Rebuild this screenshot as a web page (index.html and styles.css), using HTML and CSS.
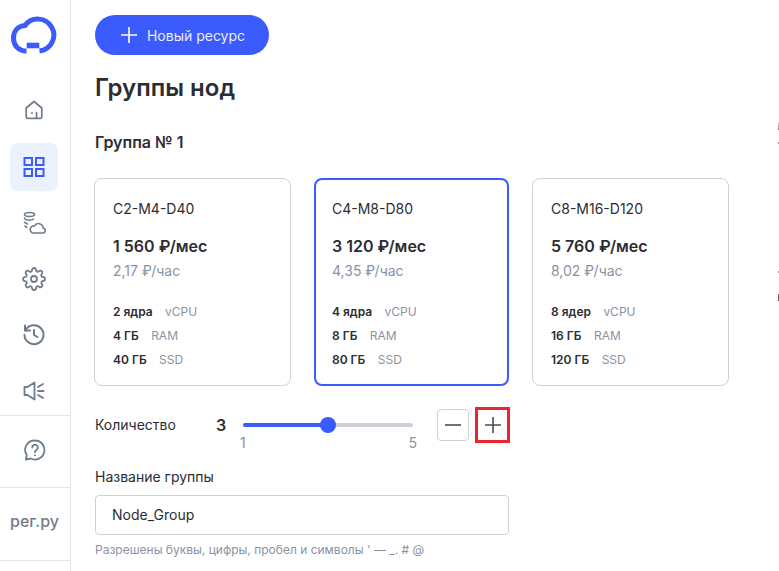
FILE: index.html
```html
<!DOCTYPE html>
<html lang="ru">
<head>
<meta charset="utf-8">
<title>Группы нод</title>
<link rel="stylesheet" href="styles.css">
</head>
<body>
<div class="app">
  <aside class="sidebar">
    <div class="logo">
      <svg width="48" height="42" viewBox="10 14 48 42" fill="none"><path d="M26.500 51C18 51 13.500 45 13.500 38C13.500 31 18 26 25 25.500A16 16 0 1 1 39.500 51" stroke="#3b5bfd" stroke-width="5"/><rect x="26.700" y="42.700" width="12.600" height="5.600" fill="#3b5bfd"/></svg>
    </div>
    <nav class="nav">
      <a class="nav-item"><svg width="22" height="22" viewBox="0 1 22 22" fill="none" stroke="#6f7c8c" stroke-width="1.700" stroke-linejoin="round" stroke-linecap="round"><path d="M3.200 9 11 2.500 18.800 9v9a1.300 1.300 0 0 1-1.300 1.300h-13a1.300 1.300 0 0 1-1.300-1.300z"/><path d="M8.500 14h.8M13.500 13.500v5.500"/></svg></a>
      <a class="nav-item active"><svg width="22" height="22" viewBox="0 0 22 22" fill="none" stroke="#3b5bfd" stroke-width="2"><rect x="1.500" y="2" width="7.500" height="7"/><rect x="13" y="2" width="7.500" height="7"/><rect x="1.500" y="13" width="7.500" height="7"/><rect x="13" y="13" width="7.500" height="7"/></svg></a>
      <a class="nav-item"><svg width="24" height="24" viewBox="0 0 24 24" fill="none" stroke="#6f7c8c" stroke-width="1.600" stroke-linecap="round" stroke-linejoin="round"><ellipse cx="7.500" cy="3.500" rx="5" ry="2"/><path d="M2.500 7c.5 1.300 2.500 2.200 5 2.200 1.500 0 3-.3 4-1M2.500 11c.5 1 1.500 1.500 3 1.900M3 15c.5.700 1 1 1.800 1.300"/><path d="M11 22h9.500a2.500 2.500 0 0 0 .5-5 4.500 4.500 0 0 0-8.500-2 3.500 3.500 0 0 0-1.500 7z"/></svg></a>
      <a class="nav-item"><svg width="24" height="24" viewBox="0 0 24 24" fill="none" stroke="#6f7c8c" stroke-width="1.800" stroke-linecap="round" stroke-linejoin="round"><circle cx="12" cy="12" r="3"/><path d="M19.400 15a1.650 1.650 0 0 0 .33 1.820l.06.06a2 2 0 0 1 0 2.830 2 2 0 0 1-2.830 0l-.06-.06a1.650 1.650 0 0 0-1.820-.33 1.650 1.650 0 0 0-1 1.510V21a2 2 0 0 1-2 2 2 2 0 0 1-2-2v-.09A1.650 1.650 0 0 0 9 19.400a1.650 1.650 0 0 0-1.820.33l-.06.06a2 2 0 0 1-2.830 0 2 2 0 0 1 0-2.830l.06-.06a1.650 1.650 0 0 0 .33-1.820 1.650 1.650 0 0 0-1.510-1H3a2 2 0 0 1-2-2 2 2 0 0 1 2-2h.09A1.650 1.650 0 0 0 4.600 9a1.650 1.650 0 0 0-.33-1.820l-.06-.06a2 2 0 0 1 0-2.830 2 2 0 0 1 2.830 0l.06.06a1.650 1.650 0 0 0 1.820.33H9a1.650 1.650 0 0 0 1-1.510V3a2 2 0 0 1 2-2 2 2 0 0 1 2 2v.09a1.650 1.650 0 0 0 1 1.510 1.650 1.650 0 0 0 1.820-.33l.06-.06a2 2 0 0 1 2.830 0 2 2 0 0 1 0 2.830l-.06.06a1.650 1.650 0 0 0-.33 1.820V9a1.650 1.650 0 0 0 1.510 1H21a2 2 0 0 1 2 2 2 2 0 0 1-2 2h-.09a1.650 1.650 0 0 0-1.510 1z"/></svg></a>
      <a class="nav-item"><svg width="22" height="22" viewBox="0 0 22 22" fill="none" stroke="#6f7c8c" stroke-width="2" stroke-linecap="round" stroke-linejoin="round"><path d="M2 1.500v5h5"/><path d="M2.500 6.500A9.500 9.500 0 1 1 1.500 11"/><path d="M11 6v5l3.500 2"/></svg></a>
      <a class="nav-item"><svg width="22" height="22" viewBox="0 0 22 22" fill="none" stroke="#6f7c8c" stroke-width="1.800" stroke-linecap="round" stroke-linejoin="round"><path d="M1.500 7v8h3l7 4.500V2.500l-7 4.500z"/><path d="M15 7l5-3M15 11h5.500M15 15l5 3"/></svg></a>
    </nav>
    <div class="side-block help">
      <svg width="22" height="22" viewBox="0 0 22 22" fill="none" stroke="#6f7c8c" stroke-width="1.800" stroke-linecap="round" stroke-linejoin="round"><path d="M11 1.500a9.500 9.500 0 1 1-4.300 18L1.800 20.500l1-4.200A9.500 9.500 0 0 1 11 1.500z"/><path d="M8.200 8.500a2.800 2.800 0 1 1 4.400 2.300c-1 .7-1.600 1.200-1.600 2.400"/><path d="M11 16.200v.1"/></svg>
    </div>
    <div class="side-block brand">рег.ру</div>
    <div class="side-rest"></div>
  </aside>
  <main class="main">
    <button class="new-btn"><svg width="16" height="16" viewBox="0 0 16 16" stroke="#fff" stroke-width="1.600" fill="none"><path d="M8 0v16M0 8h16"/></svg>Новый ресурс</button>
    <h1 class="title">Группы нод</h1>
    <h2 class="group-title">Группа № 1</h2>
    <div class="cards">
      <div class="card">
        <div class="card-name">C2-M4-D40</div>
        <div class="price">1 560 ₽/мес</div>
        <div class="hour">2,17 ₽/час</div>
        <ul class="specs">
          <li><b>2 ядра</b><span>vCPU</span></li>
          <li><b>4 ГБ</b><span>RAM</span></li>
          <li><b>40 ГБ</b><span>SSD</span></li>
        </ul>
      </div>
      <div class="card selected">
        <div class="card-name">C4-M8-D80</div>
        <div class="price">3 120 ₽/мес</div>
        <div class="hour">4,35 ₽/час</div>
        <ul class="specs">
          <li><b>4 ядра</b><span>vCPU</span></li>
          <li><b>8 ГБ</b><span>RAM</span></li>
          <li><b>80 ГБ</b><span>SSD</span></li>
        </ul>
      </div>
      <div class="card">
        <div class="card-name">C8-M16-D120</div>
        <div class="price">5 760 ₽/мес</div>
        <div class="hour">8,02 ₽/час</div>
        <ul class="specs">
          <li><b>8 ядер</b><span>vCPU</span></li>
          <li><b>16 ГБ</b><span>RAM</span></li>
          <li><b>120 ГБ</b><span>SSD</span></li>
        </ul>
      </div>
    </div>
    <div class="qty">
      <span class="qty-label">Количество</span>
      <span class="qty-value">3</span>
      <div class="slider">
        <div class="track"><div class="fill"></div><div class="thumb"></div></div>
        <div class="ticks"><span>1</span><span>5</span></div>
      </div>
      <div class="steppers">
        <button class="step"><svg width="16" height="2" viewBox="0 0 16 2"><path d="M0 1h16" stroke="#4a4f57" stroke-width="1.600"/></svg></button>
        <button class="step highlighted"><svg width="16" height="16" viewBox="0 0 16 16" fill="none"><path d="M8 0v16M0 8h16" stroke="#4a4f57" stroke-width="1.600"/></svg></button>
      </div>
    </div>
    <label class="field-label">Название группы</label>
    <div class="input">Node_Group</div>
    <p class="hint">Разрешены буквы, цифры, пробел и символы ' — _. # @</p>
  </main>
  <div class="edge">
    <div class="edge-a"></div>
    <div class="edge-b"></div>
    <div class="edge-c"></div>
    <div class="edge-d"></div>
  </div>
</div>
</body>
</html>
```
FILE: styles.css
```css
* { box-sizing: border-box; }
html, body { margin: 0; height: 571px; overflow: hidden; background: #fff; }
body { font-family: Inter, "Liberation Sans", sans-serif; color: #2b2d33; }
.app { display: flex; height: 571px; }

.sidebar { width: 71px; flex: none; border-right: 1px solid #e2e4ec; display: flex; flex-direction: column; }
.logo { height: 82px; padding: 14px 0 0 10px; }
.nav { display: flex; flex-direction: column; height: 333px; padding-top: 5px; align-items: flex-start; gap: 8px; }
.nav-item { width: 48px; height: 48px; margin-left: 10px; border-radius: 8px; display: flex; align-items: center; justify-content: center; }
.nav-item.active { background: #ebf2fd; }
.side-block { width: 70px; border-top: 1px solid #e4e6ee; display: flex; align-items: center; justify-content: center; flex: none; }
.help { height: 72px; padding-bottom: 4px; }
.brand { height: 73px; padding: 0 1px 6px 0; font-size: 16px; font-weight: 500; color: #6f7c8c; }
.side-rest { border-top: 1px solid #e4e6ee; flex: 1; width: 70px; }

.main { flex: 1; padding: 15px 0 0 24px; min-width: 0; }
.new-btn { width: 174px; height: 40px; border: 0; border-radius: 20px; background: #3b5bfd; color: #e8ecff; font: 400 14px Inter, sans-serif; display: flex; align-items: center; justify-content: center; gap: 10px; padding: 0 0 0 2px; }
.title { margin: 17px 0 0; font-size: 24px; line-height: 32px; font-weight: 600; }
.group-title { margin: 26px 0 0; font-size: 16px; line-height: 24px; font-weight: 600; }
.cards { display: flex; gap: 23px; margin-top: 24px; margin-left: -1px; }
.card { width: 197px; height: 208px; border: 1px solid #cfd0da; border-radius: 8px; padding: 20px 18px 0; }
.card.selected { border: 2px solid #3b5bfd; width: 195px; padding: 19px 16px 0; }
.card-name { font-size: 14px; line-height: 20px; }
.price { margin-top: 16px; font-size: 16px; line-height: 22px; font-weight: 600; }
.hour { margin-top: 4px; font-size: 14px; line-height: 20px; color: #8a93a3; }
.specs { list-style: none; margin: 22px 0 0; padding: 0; display: flex; flex-direction: column; gap: 6px; font-size: 12px; line-height: 18px; }
.specs b { font-weight: 600; margin-right: 12.400px; }
.specs span { color: #8a93a3; }

.qty { display: flex; align-items: flex-start; margin-top: 23px; height: 40px; }
.qty-label { width: 121px; font-size: 14px; line-height: 32px; }
.qty-value { width: 27px; font-size: 16px; font-weight: 600; line-height: 32px; }
.slider { width: 170px; padding-top: 14px; }
.track { height: 4px; background: #cdcfda; border-radius: 2px; position: relative; }
.fill { width: 85px; height: 4px; background: #3b5bfd; border-radius: 2px; }
.thumb { position: absolute; left: 77px; top: -6px; width: 16px; height: 16px; border-radius: 50%; background: #3b5bfd; }
.ticks { display: flex; justify-content: space-between; font-size: 14px; line-height: 18px; color: #8a93a3; margin: 7px -4px 0 -3px; }
.steppers { display: flex; gap: 6px; margin-left: 24px; }
.step { width: 32px; height: 32px; border: 1px solid #cfd0da; border-radius: 4px; background: #fff; display: flex; align-items: center; justify-content: center; padding: 0; }
.step.highlighted { border: 3px solid #e8282e; border-radius: 0; width: 35px; height: 36px; margin-top: -2px; }

.field-label { display: block; margin-top: 18px; font-size: 14px; line-height: 20px; }
.input { width: 414px; height: 40px; margin-top: 8px; border: 1px solid #cfd0da; border-radius: 4px; padding: 0 16px; font-size: 14px; line-height: 38px; }
.hint { margin: 7px 0 0; font-size: 12px; line-height: 16px; color: #8a93a3; }

.edge { width: 1px; flex: none; padding-top: 122px; }
.edge-a { height: 8px; background: linear-gradient(#d8d8d8, #7d7d7d); }
.edge-b { height: 2px; margin-top: 12px; background: #999; }
.edge-c { height: 2px; margin-top: 127px; background: #aaa; }
.edge-d { height: 7px; margin-top: 21px; background: #666; }
```
